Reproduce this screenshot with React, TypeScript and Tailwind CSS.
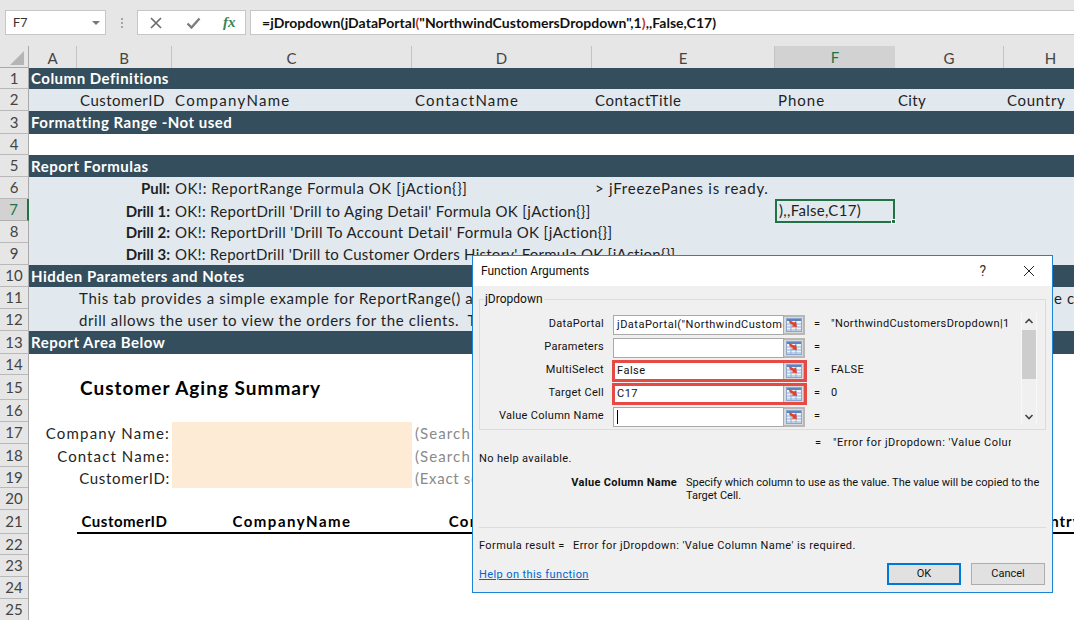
import { ReactNode } from "react";

const COLS = ["A", "B", "C", "D", "E", "F", "G", "H"];
const rowGrid = "grid grid-cols-[48px_95px_240px_180px_183px_120px_109px_94px] flex-1";

interface RowProps {
  num: number;
  height: string;
  tone?: "dark" | "light" | "white";
  selected?: boolean;
  children?: ReactNode;
}

const Row = ({ num, height, tone = "white", selected, children }: RowProps) => {
  const toneClass =
    tone === "dark"
      ? "bg-[#344e5d] text-white font-bold"
      : tone === "light"
        ? "bg-[#e1e9ef] text-[#1f1f1f]"
        : "bg-white text-[#1f1f1f]";
  return (
    <div className={`flex ${height}`}>
      <div
        className={
          selected
            ? "w-[29px] shrink-0 flex items-center justify-center bg-[#d2d2d2] text-[#217346] text-[15px] border-b border-[#b0b0b0] border-r-2 border-r-[#217346]"
            : "w-[29px] shrink-0 flex items-center justify-center bg-[#e6e6e6] text-[#444] text-[15px] border-b border-[#b9b9b9] border-r border-r-[#a9a9a9]"
        }
      >
        {num}
      </div>
      <div className={`${rowGrid} ${toneClass} items-center whitespace-nowrap text-[15px] leading-[18px] tracking-[0.3px]`}>
        {children}
      </div>
    </div>
  );
};

const Section = ({ num, height, title }: { num: number; height: string; title: string }) => (
  <Row num={num} height={height} tone="dark">
    <div className="col-span-3 pl-[2px] tracking-[0.5px] mt-[-1px]">{title}</div>
  </Row>
);

const RefEditIcon = () => (
  <svg width="16" height="14" viewBox="0 0 16 14">
    <rect x="0.5" y="0.5" width="15" height="13" fill="#eef3f9" stroke="#8aa8cf" />
    <rect x="1" y="1" width="14" height="2" fill="#5b86bd" />
    <path d="M1 6h14M1 9h14M1 12h14M5 3v10M10 3v10" stroke="#8fb0d6" strokeWidth="1" fill="none" />
    <path d="M3 2l5 2.5 2-1 1 5.5-5.5-.5 1.5-1.5L3.5 5z" fill="#e2402f" />
  </svg>
);

interface ArgProps {
  label: string;
  value?: string;
  result?: string;
  highlight?: boolean;
  caret?: boolean;
}

const Arg = ({ label, value, result, highlight, caret }: ArgProps) => (
  <div className="flex items-center h-[23px]">
    <div className="w-[124px] text-right shrink-0 tracking-[0.3px]">{label}</div>
    <div className="relative flex ml-[9px] h-[20px] w-[192px] shrink-0">
      <div className="flex-1 min-w-0 overflow-hidden whitespace-nowrap bg-white border border-[#a9a9a9] pl-[3px] leading-[18px] tracking-[0.5px]">
        {value}
        {caret && <span className="inline-block w-px h-[14px] bg-black align-middle" />}
      </div>
      <div className="w-[21px] flex items-center justify-center bg-[#d9d9d9] border-2 border-l-0 border-[#b7b7b7]">
        <RefEditIcon />
      </div>
      {highlight && (
        <div className="absolute -left-px -right-[2px] -top-px -bottom-px border-[3px] border-[#e64a45]" />
      )}
    </div>
    <div className="w-[24px] text-center shrink-0">=</div>
    <div className="ml-[2px] whitespace-nowrap overflow-hidden w-[178px] tracking-[0.4px]">{result}</div>
  </div>
);

const Dialog = () => (
  <div className="absolute left-[472px] top-[255px] w-[581px] h-[338px] border border-[#1b84d6] bg-[#f0f0f0] text-[11px] text-[#111] font-['Roboto',sans-serif] flex flex-col">
    <div className="h-[30px] bg-white flex items-center pl-[8px] text-[12px]">
      <span className="flex-1">Function Arguments</span>
      <span className="text-[14px] mr-[37px] text-[#333]">?</span>
      <svg width="12" height="12" viewBox="0 0 12 12" className="mr-[17px]">
        <path d="M1 1l10 10M11 1L1 11" stroke="#222" strokeWidth="1" />
      </svg>
    </div>
    <div className="flex-1 flex flex-col px-[6px]">
      <fieldset className="mt-[6px] h-[138px] border border-[#dcdcdc] flex pl-0 pt-[7px] min-w-0">
        <legend className="ml-[4px] px-px text-[12px] leading-[14px]">jDropdown</legend>
        <div className="flex-1 min-w-0">
          <Arg label="DataPortal" value={'jDataPortal("NorthwindCustomersDropdown",1)'} result={'"NorthwindCustomersDropdown|1'} />
          <Arg label="Parameters" />
          <Arg label="MultiSelect" value="False" result="FALSE" highlight />
          <Arg label="Target Cell" value="C17" result="0" highlight />
          <Arg label="Value Column Name" caret />
        </div>
        <div className="w-[16px] h-[112px] mr-[8px] flex flex-col items-center justify-between bg-[#f0f0f0] border-x border-[#f8f8f8] self-start">
          <svg width="10" height="17" viewBox="0 0 10 17">
            <path d="M1.5 10L5 6.5 8.5 10" stroke="#444" strokeWidth="1.6" fill="none" />
          </svg>
          <div className="w-full h-[49px] bg-[#cdcdcd] mb-auto" />
          <svg width="10" height="17" viewBox="0 0 10 17">
            <path d="M1.5 7L5 10.5 8.5 7" stroke="#444" strokeWidth="1.6" fill="none" />
          </svg>
        </div>
      </fieldset>
      <div className="flex mt-[5px] h-[16px] items-center">
        <div className="w-[345px] text-right shrink-0 pr-[3px]">=</div>
        <div className="ml-[9px] w-[178px] overflow-hidden whitespace-nowrap tracking-[0.5px]">{'"Error for jDropdown: \'Value Column Name\' is required.'}</div>
      </div>
      <div className="h-[16px] leading-[16px] tracking-[0.35px]">No help available.</div>
      <div className="flex mt-[9px] h-[51px] leading-[13px]">
        <div className="w-[198px] text-right font-bold shrink-0 tracking-[0.3px]">Value Column Name</div>
        <div className="ml-[9px] w-[360px]">
          Specify which column to use as the value. The value will be copied to the Target Cell.
        </div>
      </div>
      <div className="border-t border-[#dcdcdc] h-[12px]" />
      <div className="flex h-[14px] items-center tracking-[0.4px]">
        <div className="w-[94px] shrink-0">Formula result =</div>
        <div>Error for jDropdown: 'Value Column Name' is required.</div>
      </div>
      <div className="flex items-center mt-[10px]">
        <a className="flex-1 text-[#0066cc] underline mt-[2px] tracking-[0.4px]">Help on this function</a>
        <button className="w-[74px] h-[22px] bg-[#e1e1e1] border-2 border-[#0078d7] mr-[10px]">OK</button>
        <button className="w-[74px] h-[22px] bg-[#e1e1e1] border border-[#adadad] mr-[1px]">Cancel</button>
      </div>
    </div>
  </div>
);

const Toolbar = () => (
  <div className="h-[46px] bg-[#e6e6e6] flex items-start pt-[10px] pl-[5px] pr-0">
    <div className="w-[101px] h-[25px] bg-white border border-[#c6c6c6] flex items-center justify-between pl-[7px] pr-[5px] text-[13px] text-[#333] font-['Roboto',sans-serif]">
      F7
      <span className="w-0 h-0 border-x-[4px] border-x-transparent border-t-[4px] border-t-[#777]" />
    </div>
    <div className="w-[31px] h-[25px] flex flex-col items-center justify-center gap-[2px]">
      <span className="w-[2px] h-[2px] bg-[#a5a5a5]" />
      <span className="w-[2px] h-[2px] bg-[#a5a5a5]" />
      <span className="w-[2px] h-[2px] bg-[#a5a5a5]" />
    </div>
    <div className="w-[109px] h-[25px] bg-white border border-[#c6c6c6] flex items-center pl-[12px]">
      <svg width="12" height="12" viewBox="0 0 12 12">
        <path d="M1 1l10 10M11 1L1 11" stroke="#6d6d6d" strokeWidth="1.7" />
      </svg>
      <svg width="15" height="12" viewBox="0 0 15 12" className="ml-[24px]">
        <path d="M1.5 6.5l4 4L13.5 1.5" stroke="#7d7d7d" strokeWidth="2.4" fill="none" />
      </svg>
      <span className="ml-[22px] text-[#35855a] text-[15px] italic font-bold font-['Liberation_Serif',serif]">fx</span>
    </div>
    <div className="ml-[4px] flex-1 h-[25px] bg-white border border-[#c6c6c6] border-r-0 flex items-center pl-[11px] text-[14px] font-bold text-[#111] font-['Lato',sans-serif] tracking-[0.03px]">
      =jDropdown(jDataPortal<span className="text-[#c0392b]">(</span>"NorthwindCustomersDropdown",1<span className="text-[#c0392b]">)</span>,,False,C17)
    </div>
  </div>
);

const ColHeaders = () => (
  <div className="flex h-[22px] text-[15px]">
    <div className="w-[29px] shrink-0 bg-[#e6e6e6] border-r border-b border-[#a9a9a9] flex items-end justify-end pr-[4px] pb-[2px]">
      <svg width="14" height="14" viewBox="0 0 14 14">
        <path d="M14 0v14H0z" fill="#b5b5b5" />
      </svg>
    </div>
    <div className={rowGrid}>
      {COLS.map((c) =>
        c === "F" ? (
          <div key={c} className="bg-[#d2d2d2] text-[#217346] border-b-2 border-[#217346] flex items-center justify-center">
            {c}
          </div>
        ) : (
          <div key={c} className="bg-[#e6e6e6] text-[#444] border-r border-b border-r-[#c4c4c4] border-b-[#a9a9a9] flex items-center justify-center">
            {c}
          </div>
        ),
      )}
    </div>
  </div>
);

export default function App() {
  return (
    <div className="relative w-[1074px] h-[620px] overflow-hidden bg-white font-['Lato',sans-serif]">
      <Toolbar />
      <ColHeaders />
      <Section num={1} height="h-[21px]" title="Column Definitions" />
      <Row num={2} height="h-[22px]" tone="light">
        <div />
        <div className="pl-[3px] tracking-[0.5px]">CustomerID</div>
        <div className="pl-[3px] tracking-[1.3px]">CompanyName</div>
        <div className="pl-[3px] tracking-[1.2px]">ContactName</div>
        <div className="pl-[3px] tracking-[0.55px]">ContactTitle</div>
        <div className="pl-[3px] tracking-[1px]">Phone</div>
        <div className="pl-[3px]">City</div>
        <div className="pl-[3px] tracking-[0.7px]">Country</div>
      </Row>
      <Section num={3} height="h-[23px]" title="Formatting Range -Not used" />
      <Row num={4} height="h-[21px]" />
      <Section num={5} height="h-[22px]" title="Report Formulas" />
      <Row num={6} height="h-[22px]" tone="light">
        <div />
        <div className="text-right pr-[2px] font-bold tracking-normal">Pull:</div>
        <div className="col-span-2 pl-[3px] tracking-[0.55px]">OK!: ReportRange Formula OK [jAction{"{}"}]</div>
        <div className="pl-[3px] tracking-[0.75px]">&gt; jFreezePanes is ready.</div>
      </Row>
      <Row num={7} height="h-[22px]" tone="light" selected>
        <div />
        <div className="text-right pr-[2px] font-bold tracking-normal">Drill 1:</div>
        <div className="col-span-3 pl-[3px]">OK!: ReportDrill 'Drill to Aging Detail' Formula OK [jAction{"{}"}]</div>
        <div className="relative h-[24px] border-2 border-[#217346] pl-[2px] leading-[18px]">
          ),,False,C17)
          <span className="absolute -right-[3px] -bottom-[3px] w-[5px] h-[5px] bg-[#217346] border border-white" />
        </div>
      </Row>
      <Row num={8} height="h-[22px]" tone="light">
        <div />
        <div className="text-right pr-[2px] font-bold tracking-normal">Drill 2:</div>
        <div className="col-span-3 pl-[3px] tracking-[0.35px]">OK!: ReportDrill 'Drill To Account Detail' Formula OK [jAction{"{}"}]</div>
      </Row>
      <Row num={9} height="h-[22px]" tone="light">
        <div />
        <div className="text-right pr-[2px] font-bold tracking-normal">Drill 3:</div>
        <div className="col-span-3 pl-[3px] tracking-[0.25px]">OK!: ReportDrill 'Drill to Customer Orders History' Formula OK [jAction{"{}"}]</div>
      </Row>
      <Section num={10} height="h-[22px]" title="Hidden Parameters and Notes" />
      <Row num={11} height="h-[22px]" tone="light">
        <div />
        <div className="col-span-6 pl-[2px] tracking-[0.65px]">This tab provides a simple example for ReportRange() and ReportDrill()</div>
        <div className="pl-[50px] tracking-[0.65px]">e c</div>
      </Row>
      <Row num={12} height="h-[22px]" tone="light">
        <div />
        <div className="col-span-6 pl-[2px] tracking-[0.57px]">drill allows the user to view the orders for the clients.&nbsp;&nbsp;The</div>
      </Row>
      <Section num={13} height="h-[23px]" title="Report Area Below" />
      <Row num={14} height="h-[21px]" />
      <Row num={15} height="h-[25px]">
        <div />
        <div className="col-span-3 pl-[3px] text-[19px] font-bold text-black tracking-[1px]">Customer Aging Summary</div>
      </Row>
      <Row num={16} height="h-[22px]" />
      <Row num={17} height="h-[22px]">
        <div className="col-span-2 text-right pr-[2px] tracking-[1.2px]">Company Name:</div>
        <div className="h-full bg-[#fdebd6]" />
        <div className="pl-[3px] text-[#8a8a8a] tracking-[1.1px]">(Search by</div>
      </Row>
      <Row num={18} height="h-[23px]">
        <div className="col-span-2 text-right pr-[2px] tracking-[1.1px]">Contact Name:</div>
        <div className="h-full bg-[#fdebd6]" />
        <div className="pl-[3px] text-[#8a8a8a] tracking-[1.1px]">(Search by</div>
      </Row>
      <Row num={19} height="h-[21px]">
        <div className="col-span-2 text-right pr-[2px] tracking-[0.65px]">CustomerID:</div>
        <div className="h-full bg-[#fdebd6]" />
        <div className="pl-[3px] text-[#8a8a8a] tracking-[0.7px]">(Exact search</div>
      </Row>
      <Row num={20} height="h-[22px]" />
      <Row num={21} height="h-[24px]">
        <div />
        <div className="h-full col-span-7 grid grid-cols-[95px_240px_180px_183px_120px_109px_94px] border-b-2 border-black font-bold text-black items-center text-center">
          <div className="tracking-[0.5px]">CustomerID</div>
          <div className="tracking-[1.5px]">CompanyName</div>
          <div className="tracking-[1.3px]">ContactName</div>
          <div>ContactTitle</div>
          <div>Phone</div>
          <div>City</div>
          <div className="tracking-[1px]">Country</div>
        </div>
      </Row>
      <Row num={22} height="h-[21px]" />
      <Row num={23} height="h-[22px]" />
      <Row num={24} height="h-[22px]" />
      <Row num={25} height="h-[22px]" />
      <Dialog />
    </div>
  );
}
